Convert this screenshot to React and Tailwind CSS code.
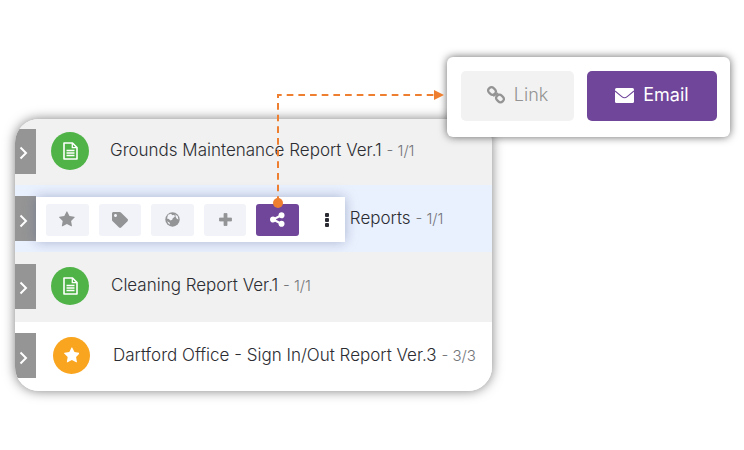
import React from "react";
import { FaTag } from "react-icons/fa";

const FileIcon = () => (
  <svg viewBox="0 0 15 18" className="h-[18px]" fill="none" stroke="currentColor" strokeWidth="1.6" aria-hidden="true">
    <path d="M1 1h8.500l4.500 4.500v11.500H1z" strokeLinejoin="round" />
    <path d="M9.300 1v4.700H14" strokeWidth="1.300" />
    <path d="M3.500 8.500h8M3.500 11h8M3.500 13.500h8" strokeWidth="1.300" />
  </svg>
);

const StarIcon = () => (
  <svg viewBox="0 0 1664 1792" className="h-[17px]" fill="currentColor" aria-hidden="true">
    <path d="M1664 647q0 22-26 48l-363 354 86 500q1 7 1 20 0 21-10.500 35.500t-30.500 14.500q-19 0-40-12l-449-236-449 236q-22 12-40 12-21 0-31.500-14.500t-10.500-35.500q0-6 2-20l86-500-364-354q-25-27-25-48 0-37 56-46l502-73 225-455q19-41 49-41t49 41l225 455 502 73q56 9 56 46z" />
  </svg>
);

const GlobeIcon = () => (
  <svg viewBox="0 0 15 15" className="size-[15px]" aria-hidden="true">
    <circle cx="7.500" cy="7.500" r="7.200" fill="currentColor" />
    <path d="M3 2.800L6 1.800l1.500 1.400 1.800-.4.500 2-2 1.400-.6 1.600-1.800.8L3.800 7 2 6.500z" fill="#f2f3f8" />
    <path d="M10.500 2.200l2.300 2.200.6 3-1.600-.6-1.200-2z" fill="#f2f3f8" />
    <path d="M2 9.200l2.400 1.200.8 2.200-1.400-.6z" fill="#f2f3f8" />
  </svg>
);

const PlusIcon = () => (
  <svg viewBox="0 0 13 13" className="size-[13px]" fill="currentColor" aria-hidden="true">
    <path d="M5 .5h3V5h4.500v3H8v4.500H5V8H.5V5H5z" stroke="currentColor" strokeWidth=".8" strokeLinejoin="round" />
  </svg>
);

const ShareIcon = () => (
  <svg viewBox="0 0 1536 1792" className="h-[17px]" fill="currentColor" aria-hidden="true">
    <path d="M1216 1024q133 0 226.500 93.500t93.500 226.500-93.500 226.500-226.500 93.500-226.500-93.500-93.500-226.500q0-12 2-34l-360-180q-92 86-218 86-133 0-226.500-93.500t-93.500-226.500 93.500-226.500 226.500-93.500q126 0 218 86l360-180q-2-22-2-34 0-133 93.500-226.500t226.500-93.500 226.500 93.500 93.500 226.500-93.500 226.500-226.500 93.500q-126 0-218-86l-360 180q2 22 2 34t-2 34l360 180q92-86 218-86z" />
  </svg>
);

const LinkIcon = () => (
  <svg viewBox="0 0 18 18" className="size-[18px]" fill="none" stroke="currentColor" strokeWidth="2.2" aria-hidden="true">
    <rect x="-3.900" y="-3.200" width="7.800" height="6.400" rx="3" transform="translate(5 5) rotate(45)" />
    <rect x="-3.900" y="-3.200" width="7.800" height="6.400" rx="3" transform="translate(13 12.500) rotate(45)" />
    <path d="M6.800 9.800L10.500 7.500" strokeWidth="1.800" strokeLinecap="round" />
  </svg>
);

const MailIcon = () => (
  <svg viewBox="0 0 19 15" className="w-[19px]" aria-hidden="true">
    <rect width="19" height="15" rx="1.500" fill="currentColor" />
    <path d="M0 3l6.800 5.600q2.700 2.200 5.400 0L19 3" fill="none" stroke="#70469a" strokeWidth="1.100" />
  </svg>
);

const MoreIcon = () => (
  <svg viewBox="0 0 4 14" className="h-[14px]" fill="currentColor" aria-hidden="true">
    <rect width="4" height="4" rx="1" />
    <rect y="5" width="4" height="4" rx="1" />
    <rect y="10" width="4" height="4" rx="1" />
  </svg>
);

const tools = [
  { label: "Favourite", icon: <StarIcon /> },
  { label: "Tag", icon: <FaTag size={16} /> },
  { label: "Publish", icon: <GlobeIcon /> },
  { label: "Add", icon: <PlusIcon /> },
  { label: "Share", icon: <ShareIcon />, active: true },
];

const Toolbar = () => (
  <div className="absolute top-[12px] left-[21px] flex h-[45px] w-[309px] items-center bg-white pl-[10px] shadow-[0_0_12px_rgba(70,90,140,0.4)]">
    <div className="grid flex-1 grid-cols-5 gap-[10px]">
      {tools.map((tool) => (
        <button
          key={tool.label}
          type="button"
          aria-label={tool.label}
          className={`flex h-8 items-center justify-center rounded-[3px] ${
            tool.active ? "bg-[#70469a] text-white" : "bg-[#f2f3f8] text-[#939496]"
          }`}
        >
          {tool.icon}
        </button>
      ))}
    </div>
    <button
      type="button"
      aria-label="More"
      className="ml-[10px] flex h-8 w-9 items-center justify-center text-[#2b2c33]"
    >
      <MoreIcon />
    </button>
  </div>
);

const Row = ({ className, badge, title, count, titleClass, children }) => (
  <li className={`relative flex items-center ${className}`}>
    <button
      type="button"
      aria-label="Expand"
      className="flex h-[45px] w-[21px] shrink-0 items-center bg-[#959595] pt-1 pl-1 text-white"
    >
      <svg viewBox="0 0 9 14" className="h-[14px]" fill="none" stroke="currentColor" strokeWidth="2" aria-hidden="true">
        <path d="M1.500 1.500L7 7l-5.500 5.500" />
      </svg>
    </button>
    {badge}
    <p className={`whitespace-nowrap text-[#2c2d32] ${titleClass}`}>
      {title} <span className="text-[15px] text-[#74767a]">- {count}</span>
    </p>
    {children}
  </li>
);

const FileBadge = () => (
  <span className="ml-[15px] flex size-[38px] shrink-0 items-center justify-center rounded-full bg-[#50b348] text-white">
    <FileIcon />
  </span>
);

const StarBadge = () => (
  <span className="ml-[17px] flex size-[37px] shrink-0 items-center justify-center rounded-full bg-[#f9a51f] text-white">
    <StarIcon />
  </span>
);

const SharePopup = () => (
  <div className="absolute -top-[62px] left-[432px] flex gap-[13px] rounded-md bg-white pt-[14px] pr-[13px] pb-4 pl-[14px] text-lg whitespace-nowrap shadow-[0_0_8px_rgba(0,0,0,0.6)]">
    <button
      type="button"
      className="flex h-[50px] w-[113px] items-center justify-center gap-[9px] rounded-[5px] bg-[#f2f2f2] pb-[2px] text-[#949494]"
    >
      <LinkIcon />
      Link
    </button>
    <button
      type="button"
      className="flex h-[50px] w-[130px] items-center justify-center gap-[9px] rounded-[5px] bg-[#70469a] pb-[2px] font-normal text-white"
    >
      <MailIcon />
      Email
    </button>
  </div>
);

// dashed line from the share button up to the popup
const Connector = () => (
  <svg
    viewBox="0 0 172 120"
    className="pointer-events-none absolute -top-[30px] left-[258px] h-[120px] w-[172px]"
    aria-hidden="true"
  >
    <path d="M5 114V6H162" fill="none" stroke="#ee7f31" strokeWidth="2" strokeDasharray="6.670 5" />
    <path d="M161 1l10 5-10 5z" fill="#ee7f31" />
    <circle cx="5" cy="114" r="5" fill="#ee7f31" />
  </svg>
);

export default function App() {
  return (
    <main className="min-h-screen bg-white px-[15px] pt-[119px] pb-10 font-['Inter',sans-serif] text-[17px] font-light">
      <div className="relative max-w-[477px]">
        <ul className="overflow-hidden rounded-3xl shadow-[0_0_12px_rgba(0,0,0,0.5)]">
          <Row
            className="h-[66px] bg-[#f1f1f1] pb-[2px]"
            badge={<FileBadge />}
            title="Grounds Maintenance Report Ver.1"
            count="1/1"
            titleClass="ml-[21px]"
          />
          <Row
            className="h-[67px] bg-[#eaf1fe]"
            title="t Reports"
            count="1/1"
            titleClass="ml-[304px]"
          >
            <Toolbar />
          </Row>
          <Row
            className="h-[70px] bg-[#f1f1f1] pb-[2px]"
            badge={<FileBadge />}
            title="Cleaning Report Ver.1"
            count="1/1"
            titleClass="ml-[22px]"
          />
          <Row
            className="h-[69px] bg-white pb-[2px]"
            badge={<StarBadge />}
            title="Dartford Office - Sign In/Out Report Ver.3"
            count="3/3"
            titleClass="ml-[23px]"
          />
        </ul>
        <SharePopup />
        <Connector />
      </div>
    </main>
  );
}
